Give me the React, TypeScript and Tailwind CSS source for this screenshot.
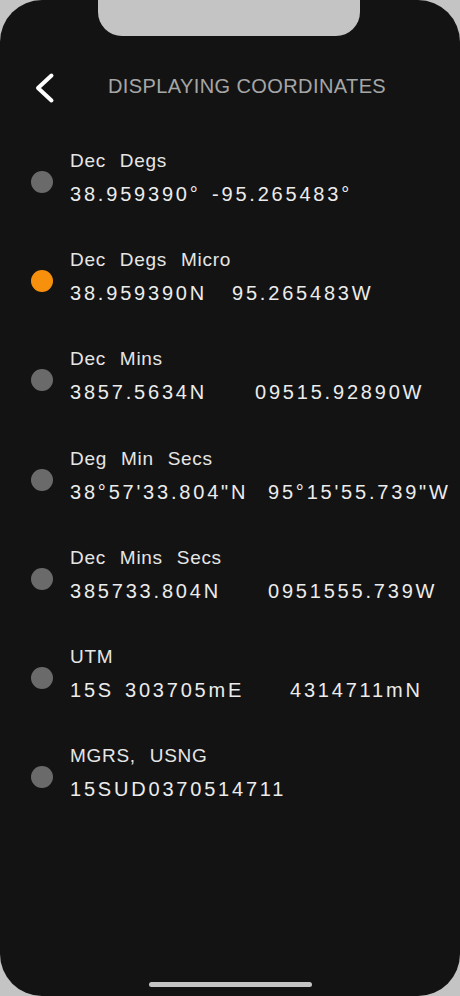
import React, { useState } from 'react';

const rows = [
  { label: 'Dec Degs', parts: [{ text: '38.959390°', w: 'w-[142px]' }, { text: '-95.265483°', w: '' }] },
  { label: 'Dec Degs Micro', parts: [{ text: '38.959390N', w: 'w-[162px]' }, { text: '95.265483W', w: '' }] },
  { label: 'Dec Mins', parts: [{ text: '3857.5634N', w: 'w-[185px]' }, { text: '09515.92890W', w: '' }] },
  { label: 'Deg Min Secs', parts: [{ text: '38°57\'33.804"N', w: 'w-[198px]' }, { text: '95°15\'55.739"W', w: '' }] },
  { label: 'Dec Mins Secs', parts: [{ text: '385733.804N', w: 'w-[198px]' }, { text: '0951555.739W', w: '' }] },
  {
    label: 'UTM',
    parts: [
      { text: '15S', w: 'w-[55px]' },
      { text: '303705mE', w: 'w-[165px]' },
      { text: '4314711mN', w: '' },
    ],
  },
  { label: 'MGRS, USNG', parts: [{ text: '15SUD0370514711', w: '' }] },
];

export default function App() {
  const [selected, setSelected] = useState(1);

  return (
    <div className="relative h-[996px] w-[460px] overflow-hidden bg-[#c4c4c4] font-['Liberation_Sans',Arial,sans-serif]">
      <div className="flex h-full flex-col rounded-[42px] bg-[#131313]">
        {/* Header */}
        <div className="mt-[68px] flex h-[36px] items-center pl-[33px]">
          <svg width="22" height="34" viewBox="0 0 22 34" fill="none" className="mt-[4px]">
            <path d="M18.5 4.5 L5 17 L18.5 29.5" stroke="#ffffff" strokeWidth="4" strokeLinecap="round" strokeLinejoin="round" />
          </svg>
          <h1 className="ml-[53px] text-[20px] leading-none tracking-[0.4px] text-[#a6a6a6]">DISPLAYING COORDINATES</h1>
        </div>

        {/* Formats */}
        <div className="mt-[45px]">
          {rows.map((row, i) => (
            <button
              key={row.label}
              onClick={() => setSelected(i)}
              className="flex h-[99.2px] w-full items-start text-left"
            >
              <span
                className={`ml-[31px] mt-[22px] h-[22px] w-[22px] shrink-0 rounded-full ${
                  selected === i ? 'bg-[#f7900c]' : 'bg-[#6a6a6a]'
                }`}
              />
              <div className="ml-[17px]">
                <p className="h-[24px] text-[19px] leading-[24px] tracking-[0.7px] text-[#e6e6e6] [word-spacing:8px]">
                  {row.label}
                </p>
                <div className="mt-[8px] flex h-[26px] text-[20px] leading-[26px] tracking-[2.8px] text-[#ececec]">
                  {row.parts.map((p) => (
                    <span key={p.text} className={`shrink-0 whitespace-nowrap ${p.w}`}>
                      {p.text}
                    </span>
                  ))}
                </div>
              </div>
            </button>
          ))}
        </div>

        <div className="mx-auto mb-[9px] mt-auto h-[5px] w-[163px] rounded-full bg-[#c4c4c4]" />
      </div>

      {/* Notch */}
      <div className="absolute left-[98px] top-0 h-[36px] w-[262px] rounded-b-[24px] bg-[#c4c4c4]" />
    </div>
  );
}
